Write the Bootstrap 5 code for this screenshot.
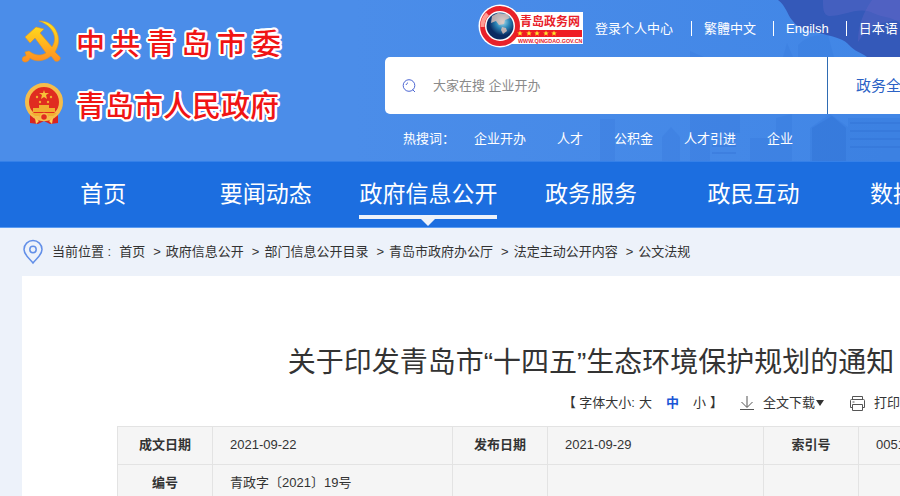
<!DOCTYPE html>
<html lang="zh-CN">
<head>
<meta charset="utf-8">
<meta name="viewport" content="width=device-width, initial-scale=1">
<title>青岛政务网</title>
<link href="https://cdn.jsdelivr.net/npm/bootstrap@5.3.0/dist/css/bootstrap.min.css" rel="stylesheet">
<style>
body{font-family:"Liberation Sans","Noto Sans CJK SC",sans-serif;font-size:13px;line-height:20px;color:#333;background:#edf2fa;overflow-x:hidden}
a{color:inherit;text-decoration:none}
.page-shell{min-width:1182px}
.wrap{padding:0 22px}
.site-head{background:linear-gradient(90deg,#4b8de9 30%,#4186e6 75%);color:#fff}
.head-art{top:0;right:0;width:582px;height:100%}
.head-row{padding-bottom:12px}
.brand-block{width:363px;padding-top:19px}
.brand-line{gap:13px;height:46px;margin-bottom:16px}
.brand-name{font:500 29px/48px "Noto Sans CJK SC",sans-serif;color:#f01414;
 text-shadow:2px 0 #fff,-2px 0 #fff,0 2px #fff,0 -2px #fff,2px 1px #fff,-2px 1px #fff,2px -1px #fff,-2px -1px #fff,1px 2px #fff,-1px 2px #fff,1px -2px #fff,-1px -2px #fff,0 0 2px #fff}
.brand-name.spaced{width:205px}
.top-links{height:57px;padding-left:93px}
.top-links a.tl{padding:0 12px;line-height:15px;border-left:1px solid #fff;white-space:nowrap}
.top-links a.tl.first{border-left:0;padding-right:18px}
.top-links a.wide{padding-right:17px}
.search-box{height:57px;background:#fff;border-radius:5px}
.search-box label{padding:0 17px}
.search-box input{width:394px;border:0;outline:0;padding:0;font-size:13px;color:#333}
.search-box input::placeholder{color:#8a8a8a;opacity:1}
.scope-btn{border:0;border-left:1px solid #2f6cb3;background:none;color:#2b62c5;font-size:15px;padding:0 28px}
.hot-row{padding:15px 18px 0;gap:31px}
.hot-row .hot-label{margin-right:-12px}
.main-nav{background:#1c6ee0;border-top:1px solid #3580e8;border-bottom:1px solid #5b9cf2;height:67px}
.main-nav .nav-item{width:calc(100% / 7)}
.main-nav a{display:block;font-size:23px;line-height:42px;padding-top:11px;white-space:nowrap;color:#fff}
.main-nav a.current{border-bottom:4px solid #edf2fa}
.nav-tip{left:50%;top:100%;margin-left:-7px;border:7px solid transparent;border-top-color:#edf2fa;border-bottom:0}
.crumbs{height:48px}
.crumbs .sep{padding:0 5px 0 8px}
.crumbs .loc{padding:0 8px}
.article{background:#fff;padding:64px 95px 0}
.article h1{font-size:28px;font-weight:400;line-height:46px;white-space:nowrap;margin:0}
.tools{height:34px;padding:0 165px 0 0}
.tools button{border:0;background:none;padding:0;color:#333;font-size:13px;white-space:nowrap}
.tools .size-on{color:#1a56d6;font-weight:700;margin:0 14px}
.info{table-layout:fixed;width:100%;background:#f5f5f5;margin-top:6px;border-collapse:collapse}
.info th,.info td{border:1px solid #e3e3e3;height:38px;padding:0 17px 2px;white-space:nowrap;overflow:hidden}
.info th{text-align:center;padding:0 0 2px}
.c-label{width:95px}.c-first{width:240px}.c-second{width:216px}
</style>
<script src="https://cdn.jsdelivr.net/npm/bootstrap@5.3.0/dist/js/bootstrap.bundle.min.js"></script>
</head>
<body>
<div class="page-shell">
<header class="site-head position-relative">
 <svg class="head-art position-absolute" viewBox="0 0 582 161" preserveAspectRatio="none" aria-hidden="true">
  <g fill="#2869d2" opacity=".16">
   <path d="M0 161v-42h15v42zM62 161v-24l9-10 9 10v24zM90 161v-46h50v18h-30v28zM150 161v-23h30v23zM176 118l16-4v47h-16z"/>
   <path d="M198 57V45q12-12 30-10l6 22zM210 161v-33l20-14 18 13v34zM248 118h60v43h-60zM300 161V30h64v131zM370 161V70h46v91z"/>
   <path d="M90 51l14 6H90zM183 57l4-14 6 14z"/>
  </g>
  <path d="M212 161v-33l20-12 14 12v33zM250 122h58v2h-58zm0 8h58v2h-58zm0 8h58v2h-58zm0 8h58v2h-58zM112 138h24v2h-24zm0 7h24v2h-24zm0 7h24v2h-24z" fill="#2461c8" opacity=".2"/>
  <path d="M178 0c8 6 9 14 14 20 8 11 19 11 31 14 13 3 22 6 26 11 5 6 13 8 18 12h315V0z" fill="#3459b9"/>
  <path d="M223 0c0 8 0 15 6 16 16 0 30-10 44-3 10 5 18 3 27 10V0z" fill="#4a61c2" opacity=".75"/>
  <path d="M272 0c-10 14-14 28-14 42 10-16 24-20 42-22V0z" fill="#6668c8" opacity=".35"/>
 </svg>
 <div class="wrap head-row d-flex position-relative">
  <div class="brand-block flex-shrink-0">
   <div class="brand-line d-flex align-items-center">
    <svg width="41" height="44" viewBox="0 0 41 44" aria-hidden="true">
     <defs><linearGradient id="gold" x2="0" y2="1"><stop stop-color="#ffe51b"/><stop offset="1" stop-color="#ff8d21"/></linearGradient></defs>
     <path d="M17 1c16-1 25 17 16 31l5 5c1 3-2 5-5 4l-4-5c-8 6-16 6-21 2-1 5-7 5-8 2 0-3 2-4 4-4 0-2-1-3-1-4l4-1c6 5 12 5 17 2L13 18l-5 5-5-6L14 7l8 2-4 4 12 14C37 16 29 5 17 1z" fill="url(#gold)" stroke="#df9127" stroke-width=".6"/>
    </svg>
    <div class="brand-name spaced d-flex justify-content-between"><span>中</span><span>共</span><span>青</span><span>岛</span><span>市</span><span>委</span></div>
   </div>
   <div class="brand-line d-flex align-items-center">
    <svg width="41" height="42" viewBox="0 0 41 42" aria-hidden="true">
     <path d="M8 29h28v11l-8 1-6-3-6 3-8-1z" fill="#d92520"/>
     <circle cx="22" cy="19" r="17" fill="#e02c20" stroke="#f5bd4b" stroke-width="4"/>
     <path d="m22 7 1 3h4l-3 2 1 4-3-2-3 2 1-4-3-2h4z" fill="#f7c238"/>
     <g fill="#f1ae30"><circle cx="15" cy="14" r="1.2"/><circle cx="29" cy="14" r="1.2"/><circle cx="18" cy="19" r="1.2"/><circle cx="26" cy="19" r="1.2"/><path d="M17 22h10v3h6v4H11v-4h6zM9 30h26l-4 3H13z"/></g>
     <circle cx="22" cy="34" r="3.5" fill="#e02c20" stroke="#f5bd4b" stroke-width="1.5"/>
     <path d="M13 35l4 3-3 3zM31 35l-4 3 3 3z" fill="#ffd05b"/>
    </svg>
    <div class="brand-name">青岛市人民政府</div>
   </div>
  </div>
  <div class="flex-grow-1">
   <div class="top-links d-flex align-items-center">
    <a href="#" aria-label="青岛政务网"><svg class="d-block" width="105" height="50" viewBox="0 0 105 50">
     <defs><radialGradient id="globe" cx=".6" cy=".35"><stop stop-color="#a9dfee"/><stop offset=".5" stop-color="#2b86b8"/><stop offset="1" stop-color="#0a2b62"/></radialGradient></defs>
     <rect x="34" y="8" width="71" height="32" fill="#fff"/>
     <circle cx="22" cy="22" r="21.5" fill="#fff"/>
     <circle cx="22" cy="22" r="17.5" fill="#fff" stroke="#e8212a" stroke-width="5"/>
     <path d="M4.500 23a17.500 17.500 0 0 1 5-13" stroke="#ff9b94" stroke-width="4" fill="none"/>
     <circle cx="22" cy="22" r="13.500" fill="url(#globe)"/>
     <path d="m14 12 6-3 9 1 3 4-5 2-1 4-5 1-3-4-5 2zM24 23l4 1 1 3-4 3-2-4z" fill="#f0c7ba" opacity=".75"/>
     <path d="M37 26h67v7H35c3-2 2-5 2-7z" fill="#ef1c23"/>
     <text x="42" y="22" fill="#e8212a" font-family="Noto Sans CJK SC,sans-serif" font-size="12" font-weight="700">青岛政务网</text>
     <g fill="#ffe52a"><path id="st" d="m42 26.500.8 1.900h2l-1.600 1.300.6 2-1.800-1.200-1.800 1.200.6-2-1.600-1.300h2z"/><use href="#st" x="9"/><use href="#st" x="17"/><use href="#st" x="26"/><use href="#st" x="34"/></g>
     <text x="40" y="39" fill="#e8212a" font-family="Liberation Sans,sans-serif" font-size="5.400" font-weight="700">WWW.QINGDAO.GOV.CN</text>
    </svg></a>
    <a class="tl first" href="#">登录个人中心</a>
    <a class="tl wide" href="#">繁體中文</a>
    <a class="tl wide" href="#">Engilsh</a>
    <a class="tl" href="#">日本语</a>
   </div>
   <form class="search-box d-flex">
    <label for="q" class="d-flex align-items-center"><svg width="14" height="14" viewBox="0 0 14 14" fill="none" stroke="#4c66d3" role="img" aria-label="搜索"><circle cx="7" cy="6.500" r="5.800"/><path d="m10.500 10.500 2.500 2.500M4 6q.5-1.500 2-2.300"/></svg></label>
    <input id="q" type="text" placeholder="大家在搜 企业开办">
    <button type="button" class="scope-btn">政务全网</button>
   </form>
   <div class="hot-row d-flex">
    <span class="hot-label">热搜词：</span><a href="#">企业开办</a><a href="#">人才</a><a href="#">公积金</a><a href="#">人才引进</a><a href="#">企业</a>
   </div>
  </div>
 </div>
</header>
<nav class="main-nav wrap">
 <ul class="list-unstyled d-flex m-0">
  <li class="nav-item d-flex justify-content-center"><a href="#">首页</a></li>
  <li class="nav-item d-flex justify-content-center"><a href="#">要闻动态</a></li>
  <li class="nav-item d-flex justify-content-center"><a class="current position-relative" href="#">政府信息公开<span class="nav-tip position-absolute mt-1"></span></a></li>
  <li class="nav-item d-flex justify-content-center"><a href="#">政务服务</a></li>
  <li class="nav-item d-flex justify-content-center"><a href="#">政民互动</a></li>
  <li class="nav-item d-flex justify-content-center"><a href="#">数据开放</a></li>
 </ul>
</nav>
<main class="wrap">
 <nav class="crumbs d-flex align-items-center" aria-label="当前位置">
  <svg width="22" height="26" viewBox="0 0 22 26" fill="none" stroke="#628fe8" stroke-width="1.500" aria-hidden="true"><path d="M11 24C8 20 2 16 2 10.500a9 9 0 0 1 18 0C20 16 14 20 11 24z"/><circle cx="11" cy="10.500" r="3.200"/></svg>
  <span class="loc">当前位置 :</span>
  <a href="#">首页</a><span class="sep">&gt;</span>
  <a href="#">政府信息公开</a><span class="sep">&gt;</span>
  <a href="#">部门信息公开目录</a><span class="sep">&gt;</span>
  <a href="#">青岛市政府办公厅</a><span class="sep">&gt;</span>
  <a href="#">法定主动公开内容</a><span class="sep">&gt;</span>
  <a href="#">公文法规</a>
 </nav>
 <article class="article">
  <h1 class="text-center">关于印发青岛市“十四五”生态环境保护规划的通知</h1>
  <div class="tools d-flex justify-content-end align-items-center">
   <span>【 字体大小:</span>
   <button type="button" class="ms-1">大</button>
   <button type="button" class="size-on">中</button>
   <button type="button">小</button><span class="ms-1">】</span>
   <button type="button" class="ms-3 d-flex align-items-center"><svg class="me-2" width="16" height="16" viewBox="0 0 16 16" fill="none" stroke="#555" aria-hidden="true"><path d="M8 1v11M2.500 7 8 12.500 13.500 7M1 14.500h14"/></svg>全文下载<svg width="10" height="8" viewBox="0 0 10 8" aria-hidden="true"><path d="M1 1h8L5 7z" fill="#333"/></svg></button>
   <button type="button" class="ms-3 d-flex align-items-center"><svg class="mx-2" width="17" height="17" viewBox="0 0 17 17" fill="none" stroke="#555" aria-hidden="true"><path d="M3.500 5V1.500h10V5M3.500 12.500h-2V5.500q0-1 1-1h12q1 0 1 1v7h-2M3.500 9.500h10v6h-10zM3.500 7h2"/></svg>打印</button>
  </div>
  <table class="info">
   <colgroup><col class="c-label"><col class="c-first"><col class="c-label"><col class="c-second"><col class="c-label"><col></colgroup>
   <tbody>
    <tr><th scope="row">成文日期</th><td>2021-09-22</td><th scope="row">发布日期</th><td>2021-09-29</td><th scope="row">索引号</th><td>0051</td></tr>
    <tr><th scope="row">编号</th><td>青政字〔2021〕19号</td><th></th><td></td><th></th><td></td></tr>
   </tbody>
  </table>
 </article>
</main>
</div>
</body>
</html>
